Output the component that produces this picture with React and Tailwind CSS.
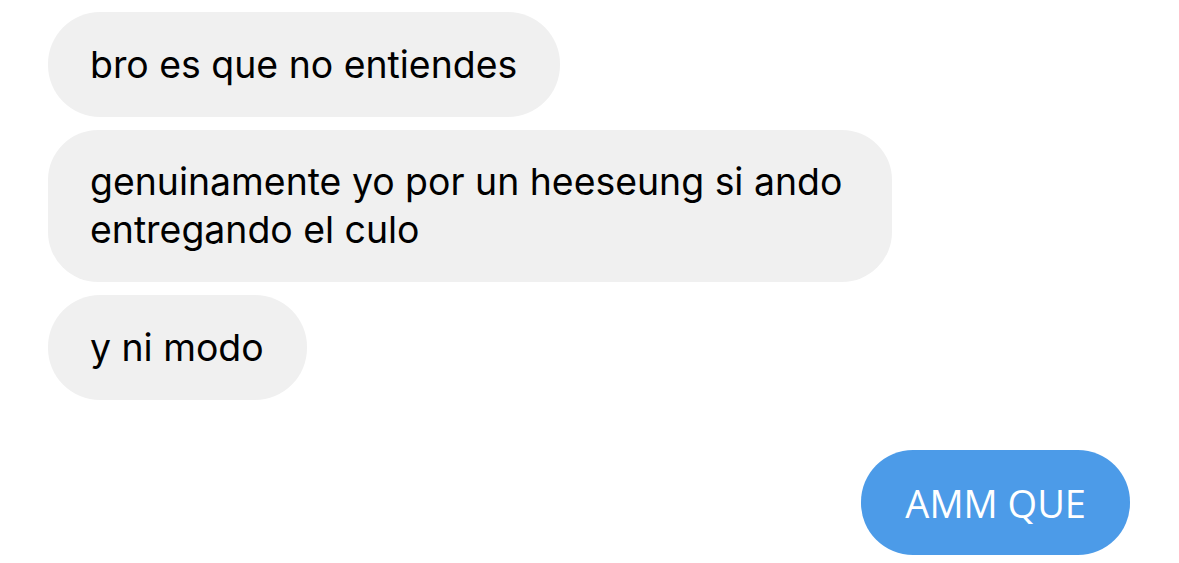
export default function App() {
  return (
    <div className="w-[1179px] h-[563px] bg-white overflow-hidden flex flex-col pt-[12px] px-[48px] pr-[49px] font-['Inter',sans-serif] text-[37.4px] leading-[48px] text-black">
      <div className="flex flex-col items-start gap-[13px]">
        <div className="bg-[#f0f0f0] rounded-[52px] pl-[42px] pr-[43px] py-[28.5px]">
          bro es que no entiendes
        </div>
        <div className="bg-[#f0f0f0] rounded-[50px] pl-[42px] pr-[50px] py-[28px]">
          genuinamente yo por un heeseung si ando
          <br />
          entregando el culo
        </div>
        <div className="bg-[#f0f0f0] rounded-[52px] pl-[42px] pr-[43px] py-[28.5px]">
          y ni modo
        </div>
      </div>
      <div className="flex justify-end mt-[50px]">
        <div className="bg-[#4c9be8] text-white rounded-[52px] px-[44px] py-[28.5px] text-[38px] font-['Open_Sans',sans-serif]">
          AMM QUE
        </div>
      </div>
    </div>
  );
}
